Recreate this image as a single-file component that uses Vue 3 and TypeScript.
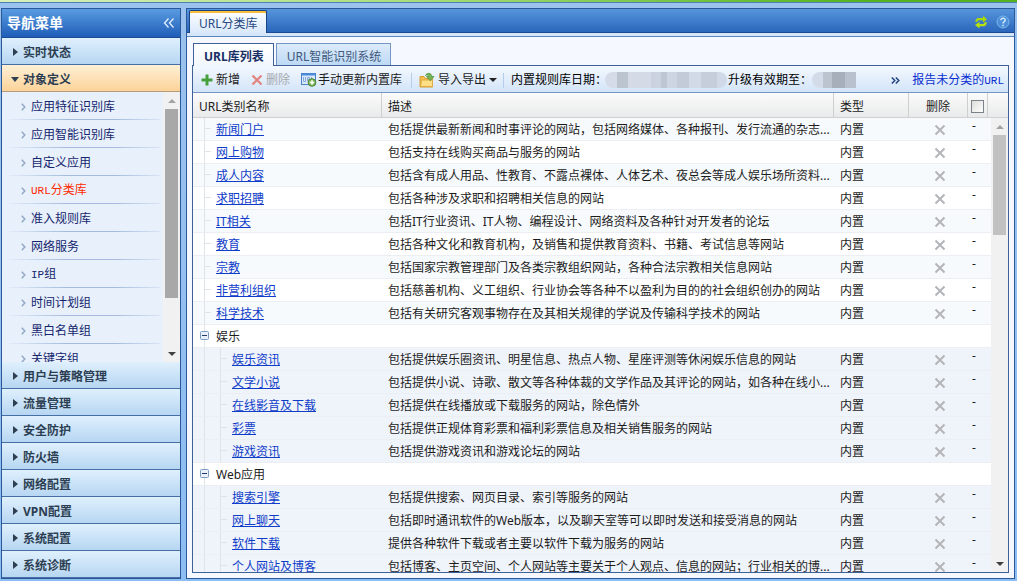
<script setup lang="ts">
import { ref } from 'vue'

interface Row {
  name: string
  desc?: string
  level: number
}

const topGroups = ['实时状态', '对象定义']
const bottomGroups = ['用户与策略管理', '流量管理', '安全防护', '防火墙', '网络配置', 'VPN配置', '系统配置', '系统诊断']

const subItems = [
  { latin: '', text: '应用特征识别库' },
  { latin: '', text: '应用智能识别库' },
  { latin: '', text: '自定义应用' },
  { latin: 'URL', text: '分类库' },
  { latin: '', text: '准入规则库' },
  { latin: '', text: '网络服务' },
  { latin: 'IP', text: '组' },
  { latin: '', text: '时间计划组' },
  { latin: '', text: '黑白名单组' },
  { latin: '', text: '关键字组' },
]

const rows: Row[] = [
  { name: '新闻门户', level: 1, desc: '包括提供最新新闻和时事评论的网站，包括网络媒体、各种报刊、发行流通的杂志...' },
  { name: '网上购物', level: 1, desc: '包括支持在线购买商品与服务的网站' },
  { name: '成人内容', level: 1, desc: '包括含有成人用品、性教育、不露点裸体、人体艺术、夜总会等成人娱乐场所资料...' },
  { name: '求职招聘', level: 1, desc: '包括各种涉及求职和招聘相关信息的网站' },
  { name: 'IT相关', level: 1, desc: '包括IT行业资讯、IT人物、编程设计、网络资料及各种针对开发者的论坛' },
  { name: '教育', level: 1, desc: '包括各种文化和教育机构，及销售和提供教育资料、书籍、考试信息等网站' },
  { name: '宗教', level: 1, desc: '包括国家宗教管理部门及各类宗教组织网站，各种合法宗教相关信息网站' },
  { name: '非营利组织', level: 1, desc: '包括慈善机构、义工组织、行业协会等各种不以盈利为目的的社会组织创办的网站' },
  { name: '科学技术', level: 1, desc: '包括有关研究客观事物存在及其相关规律的学说及传输科学技术的网站' },
  { name: '娱乐', level: 0 },
  { name: '娱乐资讯', level: 2, desc: '包括提供娱乐圈资讯、明星信息、热点人物、星座评测等休闲娱乐信息的网站' },
  { name: '文学小说', level: 2, desc: '包括提供小说、诗歌、散文等各种体裁的文学作品及其评论的网站，如各种在线小...' },
  { name: '在线影音及下载', level: 2, desc: '包括提供在线播放或下载服务的网站，除色情外' },
  { name: '彩票', level: 2, desc: '包括提供正规体育彩票和福利彩票信息及相关销售服务的网站' },
  { name: '游戏资讯', level: 2, desc: '包括提供游戏资讯和游戏论坛的网站' },
  { name: 'Web应用', level: 0 },
  { name: '搜索引擎', level: 2, desc: '包括提供搜索、网页目录、索引等服务的网站' },
  { name: '网上聊天', level: 2, desc: '包括即时通讯软件的Web版本，以及聊天室等可以即时发送和接受消息的网站' },
  { name: '软件下载', level: 2, desc: '提供各种软件下载或者主要以软件下载为服务的网站' },
  { name: '个人网站及博客', level: 2, desc: '包括博客、主页空间、个人网站等主要关于个人观点、信息的网站；行业相关的博...' },
]

const activeSub = ref(3)
const activeTab = ref(0)
const tabs = ['URL库列表', 'URL智能识别系统']
const allChecked = ref(false)
</script>

<template>
  <div class="page">
    <div class="strip"></div>
    <div class="columns">
      <nav class="sidebar" aria-label="导航菜单">
        <div class="side-head">
          <span>导航菜单</span>
          <button class="collapse" aria-label="收起">
            <svg width="12" height="10" viewBox="0 0 12 10"><path d="M5.5 0.5L1.5 5l4 4.5M10.5 0.5L6.5 5l4 4.5" fill="none" stroke="#e4f0ff" stroke-width="1.3" /></svg>
          </button>
        </div>
        <button v-for="(g, i) in topGroups" :key="g" class="group" :class="{ open: i === 1 }">
          <span class="tri"></span>{{ g }}
        </button>
        <div class="submenu">
          <ul>
            <li v-for="(s, i) in subItems" :key="i">
              <a href="#" :class="{ current: i === activeSub }" @click.prevent="activeSub = i">
                <svg width="5" height="8" viewBox="0 0 5 8"><path d="M0.8 0.8L3.8 4L0.8 7.2" fill="none" stroke="#93a9c6" stroke-width="1.5" /></svg>
                <span><span v-if="s.latin" class="mono">{{ s.latin }}</span>{{ s.text }}</span>
              </a>
            </li>
          </ul>
          <div class="scroll side-scroll">
            <span class="up"></span>
            <div class="thumb"></div>
            <span class="down"></span>
          </div>
        </div>
        <button v-for="g in bottomGroups" :key="g" class="group">
          <span class="tri"></span>{{ g }}
        </button>
      </nav>

      <main class="main">
        <header class="main-head">
          <button class="page-tab">URL分类库</button>
          <div class="head-tools">
            <button aria-label="刷新">
              <svg width="14" height="14" viewBox="0 0 14 14">
                <path d="M1.5 7V5L3.500 3H9V0.800L13 4.300L9 7.500V5.300H4.500L3 7z" fill="#a9d808" />
                <path d="M12.500 7V9.500L10.500 11.300H5.500V13.500L1 10L5.500 6.800V9H9.500L11 7z" fill="#b9e010" />
              </svg>
            </button>
            <button aria-label="帮助">
              <svg width="14" height="14" viewBox="0 0 14 14">
                <circle cx="7" cy="7" r="6" fill="#4c8fd8" stroke="#7db4ec" />
                <path d="M4.8 5.3C4.8 2.5 9.3 2.6 9.2 5.2C9.2 6.7 7 6.7 7 8.5M7 9.8v1.5" fill="none" stroke="#d5e9fc" stroke-width="1.5" />
              </svg>
            </button>
          </div>
        </header>
        <div class="main-body">
          <div class="tabs" role="tablist">
            <button
              v-for="(t, i) in tabs"
              :key="t"
              role="tab"
              class="tab"
              :class="{ active: i === activeTab }"
              :aria-selected="i === activeTab"
              @click="activeTab = i"
            >{{ t }}</button>
          </div>
          <section class="panel">
            <div class="toolbar">
              <button class="tool">
                <svg width="12" height="12" viewBox="0 0 12 12"><path d="M4.5 0.5h3v4h4v3h-4v4h-3v-4h-4v-3h4z" fill="#45a03c" /></svg>
                新增
              </button>
              <button class="tool disabled" disabled>
                <svg width="12" height="12" viewBox="0 0 12 12"><path d="M1.5 1.5l9 9M10.5 1.5l-9 9" stroke="#e2837f" stroke-width="2.2" /></svg>
                删除
              </button>
              <button class="tool update">
                <svg width="16" height="14" viewBox="0 0 16 14">
                  <rect x="0.5" y="0.5" width="14" height="11" fill="#dbe8fa" stroke="#4c83c8" />
                  <path d="M1 1.500h13" stroke="#4b8bdc" stroke-width="2" />
                  <path d="M2.500 4v4.500h2V4M6.500 8.500V4.500h2v2h-2M10.500 4v3" fill="none" stroke="#86a9dc" />
                  <circle cx="11" cy="9.500" r="3.800" fill="#7cb85a" stroke="#4b8534" />
                  <path d="M11 7.300v4.400M8.800 9.500h4.400" stroke="#fff" stroke-width="1.500" />
                </svg>
                手动更新内置库
              </button>
              <span class="sep"></span>
              <button class="tool">
                <svg width="16" height="16" viewBox="0 0 16 16">
                  <path d="M1 4.500h4l1.500 2H13.500v8.500H1z" fill="#f2bf4c" stroke="#d69b35" />
                  <path d="M2.500 8H13.500V14.500H1.500z" fill="#ffdf86" stroke="#e0ab40" />
                  <path d="M6.500 3.500C7.500 0.800 12.500 0.200 12.800 4.500H15L11.300 8.800L7.500 4.500H9.800C9.800 3 8 2.800 6.500 3.500z" fill="#74b656" stroke="#4c8b38" stroke-width="0.7" />
                </svg>
                导入导出
                <span class="caret"></span>
              </button>
              <span class="sep"></span>
              <span class="info">内置规则库日期：</span>
              <span class="mosaic long"></span>
              <span class="info">升级有效期至：</span>
              <span class="mosaic short"></span>
              <button class="more" aria-label="更多">
                <svg width="9" height="7" viewBox="0 0 9 7"><path d="M0.8 0.5l3 3l-3 3M4.8 0.5l3 3l-3 3" fill="none" stroke="#24457f" stroke-width="1.5" /></svg>
              </button>
              <a class="report" href="#">报告未分类的<span class="mono">URL</span></a>
            </div>
            <div class="grid">
              <table>
                <colgroup>
                  <col class="c-name" /><col /><col class="c-type" /><col class="c-del" /><col class="c-check" /><col class="c-fill" />
                </colgroup>
                <thead>
                  <tr>
                    <th>URL类别名称</th>
                    <th>描述</th>
                    <th>类型</th>
                    <th class="mid">删除</th>
                    <th class="check"><input v-model="allChecked" type="checkbox" aria-label="全选" /></th>
                    <th></th>
                  </tr>
                </thead>
                <tbody>
                  <tr v-for="r in rows" :key="r.name" :class="'level' + r.level">
                    <td class="name">
                      <div class="tree">
                        <span class="branch" :class="{ node: r.level === 0, elbow: r.level === 1 }">
                          <button v-if="r.level === 0" class="toggle" aria-label="折叠">
                            <svg width="9" height="9" viewBox="0 0 9 9"><rect x="0.5" y="0.5" width="8" height="8" rx="1" fill="#e9f0f8" stroke="#7d9cc4" /><path d="M2 4.5h5" stroke="#1e3b6d" /></svg>
                          </button>
                        </span>
                        <span v-if="r.level === 2" class="branch elbow"></span>
                        <a v-if="r.level > 0" href="#">{{ r.name }}</a>
                        <span v-else>{{ r.name }}</span>
                      </div>
                    </td>
                    <td>{{ r.desc }}</td>
                    <td>{{ r.desc ? '内置' : '' }}</td>
                    <td class="mid">
                      <button v-if="r.desc" class="del" aria-label="删除">
                        <svg width="12" height="12" viewBox="0 0 12 12"><path d="M1.5 1.5l9 9M10.5 1.5l-9 9" stroke="#b3b5b8" stroke-width="2" /></svg>
                      </button>
                    </td>
                    <td class="dash">{{ r.desc ? '-' : '' }}</td>
                    <td></td>
                  </tr>
                </tbody>
              </table>
              <div class="scroll grid-scroll">
                <span class="up"></span>
                <div class="thumb"></div>
                <span class="down"></span>
              </div>
            </div>
          </section>
        </div>
      </main>
    </div>
  </div>
</template>

<style>
body {
  margin: 0;
}
</style>

<style scoped>
* {
  box-sizing: border-box;
}
.page {
  height: 100vh;
  display: flex;
  flex-direction: column;
  overflow: hidden;
  background: linear-gradient(#9cc2ee, #8cbdf3);
  font: 12px/16px "Noto Sans", "Noto Sans CJK SC", sans-serif;
  color: #1c1c1c;
}
button {
  font: inherit;
  color: inherit;
  border: 0;
  padding: 0;
  margin: 0;
  background: none;
  cursor: pointer;
}
svg {
  display: block;
  flex: none;
}
.strip {
  flex: none;
  height: 3px;
  background: linear-gradient(90deg, #d9f0bd, #a9dd7c 40%, #55b31f 85%);
  border-bottom: 1px solid #4d80b4;
}
.columns {
  flex: 1;
  min-height: 0;
  display: flex;
  gap: 5px;
  padding: 5px 2px 2px 1px;
}
.mono {
  font-family: "Liberation Mono", monospace;
  font-size: 11px;
}

/* navigation */
.sidebar {
  flex: none;
  width: 180px;
  display: flex;
  flex-direction: column;
  border: 1px solid #2b5899;
  background: #e8f0fb;
}
.side-head {
  flex: none;
  height: 29px;
  display: flex;
  align-items: center;
  justify-content: space-between;
  padding: 0 5px;
  font-size: 14px;
  font-weight: 700;
  color: #fff;
  background: linear-gradient(#5a9ce2, #1f5db8);
  border-bottom: 1px solid #1d4b92;
}
.group {
  flex: none;
  height: 27px;
  display: flex;
  align-items: center;
  padding: 3px 0 0 11px;
  font-weight: 700;
  color: #2c3e52;
  background: linear-gradient(#dff0fd, #b7d6f2);
  border-bottom: 1px solid #466fa6;
}
.tri {
  width: 10px;
  height: 10px;
}
.tri::before {
  content: "";
  display: block;
  width: 0;
  border: 4px solid transparent;
  border-left: 5px solid #2f3f52;
  border-right: 0;
}
.group.open {
  background: linear-gradient(#fff0d6, #fcd399);
  border-bottom-color: #b59c7c;
}
.group.open .tri::before {
  border: 4px solid transparent;
  border-top: 5px solid #2f3f52;
  border-bottom: 0;
  margin: 2px 0 0 -2px;
}
.submenu {
  flex: 1;
  min-height: 0;
  display: flex;
  overflow: hidden;
}
.submenu ul {
  flex: 1;
  list-style: none;
  margin: 0;
  padding: 0 3px;
}
.submenu a {
  height: 28px;
  display: flex;
  align-items: center;
  gap: 5px;
  padding: 2px 0 0 16px;
  color: #14266e;
  text-decoration: none;
  border-bottom: 1px solid;
  border-image: linear-gradient(90deg, #e8f0fb, #a3bcde 40%, #a3bcde 70%, #d9e5f4) 1;
}
.submenu a.current {
  color: #ff2a00;
}

/* scrollbars */
.scroll {
  width: 17px;
  display: flex;
  flex-direction: column;
  align-items: center;
  background: #f1f1f1;
}
.scroll .up,
.scroll .down {
  flex: none;
  width: 8px;
  height: 17px;
  display: flex;
  align-items: center;
}
.up::before,
.down::before {
  content: "";
  border: 4px solid transparent;
}
.up::before {
  border-top: 0;
  border-bottom-color: #a3a3a3;
}
.down::before {
  border-bottom: 0;
  border-top-color: #404040;
}
.scroll .thumb {
  width: 13px;
  background: #a8a8a8;
}
.scroll .down {
  margin-top: auto;
}
.side-scroll {
  flex: none;
  width: 17px;
}
.side-scroll .thumb {
  height: 70%;
}

/* main area */
.main {
  flex: 1;
  min-width: 0;
  display: flex;
  flex-direction: column;
  border: 1px solid #2b5899;
  background: #f5f9ff;
}
.main-head {
  flex: none;
  height: 28px;
  display: flex;
  justify-content: space-between;
  padding: 1px 4px 3px 2px;
  background: linear-gradient(#5795dc, #2b66bb 23px, #1c4a92 23px, #1c4a92 24px, #d4e5f8 24px);
  border-bottom: 1px solid #5a86bf;
}
.page-tab {
  padding: 4px 8px 0 9px;
  color: #284a82;
  background: linear-gradient(#fff, #d8e8fa);
  border: 1px solid #174584;
  border-bottom: 0;
  border-radius: 2px 2px 0 0;
  box-shadow: inset 0 2px #f9bd3c;
}
.head-tools {
  display: flex;
  align-items: center;
  gap: 8px;
}
.main-body {
  flex: 1;
  min-height: 0;
  display: flex;
  flex-direction: column;
  padding: 6px 5px 5px;
}
.tabs {
  flex: none;
  display: flex;
  gap: 2px;
  padding-left: 1px;
}
.tab {
  height: 22px;
  padding: 4px 9px 0 10px;
  color: #41597c;
  background: linear-gradient(#dcebfa, #bdd9f5);
  border: 1px solid #7396c2;
  border-bottom: 0;
}
.tab.active {
  height: 23px;
  margin-bottom: -1px;
  position: relative;
  font-weight: 700;
  color: #1a2f66;
  background: linear-gradient(#fff, #f1f7fe);
  border-color: #3e6297;
}
.panel {
  flex: 1;
  min-height: 0;
  display: flex;
  flex-direction: column;
  border: 1px solid #3e6297;
  background: #fff;
}
.toolbar {
  flex: none;
  height: 27px;
  display: flex;
  align-items: center;
  padding: 2px 4px 0 8px;
  white-space: nowrap;
  background: linear-gradient(#f3f8fe, #d3e4f8);
  border-bottom: 1px solid #7596c2;
}
.tool {
  display: flex;
  align-items: center;
  gap: 3px;
  margin-right: 11px;
}
.tool.disabled {
  color: #a5a9af;
}
.tool.update {
  gap: 1px;
  margin-right: 9px;
}
.sep {
  width: 1px;
  height: 15px;
  margin-right: 7px;
  background: #b5cdea;
}
.caret {
  border: 4px solid transparent;
  border-top-color: #222;
  border-bottom: 0;
}
.tool:has(.caret) {
  margin-right: 6px;
}
.info {
  color: #000;
}
.mosaic {
  height: 16px;
  border-radius: 8px 0 0 8px;
}
.mosaic.long {
  width: 122px;
  margin-left: -2px;
  margin-right: 1px;
  border-radius: 8px;
  background: linear-gradient(90deg, #d5dce8 0 12px, #bcc4d0 12px 23px, #d4dbe7 23px 46px, #cbd3e0 46px 56px, #bec6d4 56px 62px, #cdd5e2 62px 72px, #c3cbd9 72px 84px, #d2dae7 84px 96px, #c6cedb 96px 112px, #d0d9e7 112px);
}
.mosaic.short {
  width: 44px;
  background: linear-gradient(90deg, #d3dbe8 0 11px, #bcc4d0 11px 20px, #a7afbb 20px 33px, #b9c1ce 33px);
}
.more {
  margin-left: auto;
  margin-right: 12px;
}
.report {
  color: #0a2fd0;
  text-decoration: none;
}

/* table */
.grid {
  flex: 1;
  min-height: 0;
  position: relative;
  overflow: hidden;
}
table {
  width: 100%;
  table-layout: fixed;
  border-collapse: separate;
  border-spacing: 0;
}
.c-name { width: 189px; }
.c-type { width: 75px; }
.c-del { width: 59px; }
.c-check { width: 20px; }
.c-fill { width: 20px; }
th {
  height: 25px;
  padding: 3px 6px 0;
  text-align: left;
  font-weight: 400;
  background: linear-gradient(#fbfbfb, #e9eaeb);
  border-bottom: 1px solid #d0d0d0;
  border-right: 1px solid #cfcfcf;
}
th:last-child {
  border-right: 0;
}
td {
  height: 23px;
  padding: 2px 6px 0;
  white-space: nowrap;
  overflow: hidden;
  border-bottom: 1px solid #ebeef2;
}
.mid {
  text-align: center;
}
.mid svg {
  margin: 0 auto;
}
.del {
  display: block;
  margin: 0 auto;
  padding-left: 3px;
}
th.check {
  padding: 3px 0 0;
}
.check input {
  appearance: none;
  display: block;
  width: 13px;
  height: 13px;
  margin: 0 0 0 3px;
  border: 1px solid #7b8289;
  background: linear-gradient(135deg, #dcdcd8, #fff);
}
.level1:nth-child(odd) td {
  background: #f7fafd;
}
.level2 td {
  background: #eff3fa;
}
td.dash {
  padding: 0 4px 6px;
  line-height: 14px;
}
td.name {
  padding: 0 0 0 3px;
}
.tree {
  display: flex;
  align-items: center;
  height: 22px;
}
.branch {
  width: 16px;
  height: 22px;
  background: linear-gradient(90deg, transparent 8px, #dfe4e9 8px, #dfe4e9 9px, transparent 9px);
}
.branch.elbow {
  background:
    linear-gradient(#dfe4e9, #dfe4e9) 8px 10px / 7px 1px no-repeat,
    linear-gradient(90deg, transparent 8px, #dfe4e9 8px, #dfe4e9 9px, transparent 9px);
}
.tree > :last-child {
  margin-left: 4px;
  padding-top: 2px;
}
.toggle {
  display: block;
  margin: 6px 0 0 4px;
}
td a {
  color: #0f3dc9;
}
.grid-scroll {
  position: absolute;
  top: 25px;
  right: 0;
  bottom: 0;
}
.grid-scroll .thumb {
  height: 22%;
  background: #c1c1c1;
}
</style>
